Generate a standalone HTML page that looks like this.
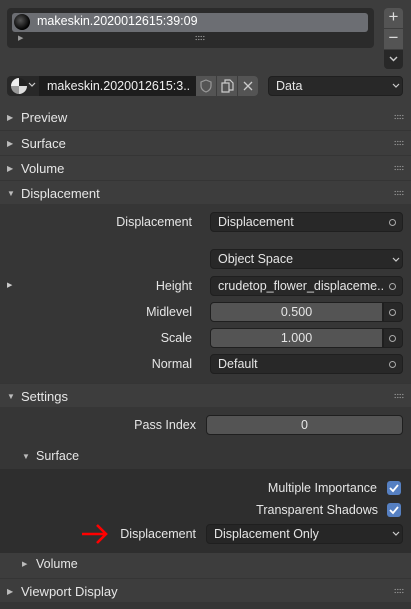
<!DOCTYPE html>
<html><head><style>
*{box-sizing:border-box;margin:0;padding:0}
body{width:411px;height:609px;background:#3d3d3d;font-family:"Liberation Sans","DejaVu Sans",sans-serif;font-size:12.5px;color:#e6e6e6;position:relative;overflow:hidden}
.a{position:absolute}
.hdr{position:absolute;left:0;width:411px;height:24px;background:#3d3d3d;border-top:1px solid #353535}
.hdr .t{position:absolute;left:21px;top:5px;font-size:13px}
.hdr .tri{position:absolute;left:7px;top:8px;font-size:8px;color:#bbb}
.dots{position:absolute;right:7px;top:9px;width:10px;height:6px;background:radial-gradient(circle,#888 0.6px,transparent 0.8px) 0 0/2.5px 3px}
.fld{position:absolute;height:20px;border-radius:4px;background:#282828;border:1px solid #1f1f1f;padding-left:7px;line-height:18px;font-size:12.5px}
.num{background:#545454;text-align:center;padding:0}
.lbl{position:absolute;text-align:right;font-size:12.5px;line-height:20px}
.dot{position:absolute;width:7px;height:7px;border:1.5px solid #aaa;border-radius:50%}
.cb{position:absolute;width:14px;height:14px;border-radius:3px;background:#5680c2}
</style></head><body>
<div class="a" style="left:7px;top:8px;width:367px;height:40px;background:#2b2b2b;border-radius:4px"></div>
<div class="a" style="left:12px;top:13px;width:356px;height:19px;background:#6c6e73;border-radius:3px"></div>
<div class="a" style="left:14px;top:14px;width:16px;height:16px;border-radius:50%;background:radial-gradient(circle at 40% 40%,#555,#000 70%)"></div>
<div class="a" style="left:37px;top:14px;font-size:12.5px;color:#fff">makeskin.2020012615:39:09</div>
<div class="a" style="left:18px;top:34px;font-size:7px;color:#999">▶</div>
<div class="a" style="left:195px;top:35px;width:10px;height:6px;background:radial-gradient(circle,#888 0.6px,transparent 0.8px) 0 0/2.5px 3px"></div>
<div class="a" style="left:384px;top:8px;width:19px;height:20px;background:#545454;border-radius:4px 4px 0 0;text-align:center;font-size:17px;line-height:18px;color:#ddd">+</div>
<div class="a" style="left:384px;top:29px;width:19px;height:20px;background:#545454;text-align:center;font-size:17px;line-height:18px;color:#ddd">−</div>
<div class="a" style="left:384px;top:50px;width:19px;height:19px;background:#282828;border-radius:0 0 4px 4px"></div>
<svg class="a" style="left:388px;top:55px" width="11" height="8"><path d="M2 2l3.5 3.5L9 2" stroke="#ccc" stroke-width="1.4" fill="none"/></svg>
<div class="a" style="left:7px;top:76px;width:32px;height:20px;background:#282828;border-radius:4px 0 0 4px"></div>
<div class="a" style="left:11px;top:78px;width:16px;height:16px;border-radius:50%;background:conic-gradient(#222 0 25%,#ddd 25% 50%,#999 50% 75%,#eee 75%)"></div>
<svg class="a" style="left:28px;top:82px" width="8" height="6"><path d="M1 1l3 3 3-3" stroke="#ccc" stroke-width="1.2" fill="none"/></svg>
<div class="a" style="left:39px;top:76px;width:157px;height:20px;background:#1d1d1d;padding-left:8px;line-height:20px;color:#eee">makeskin.2020012615:3..</div>
<div class="a" style="left:196px;top:76px;width:20px;height:20px;background:#545454"></div>
<svg class="a" style="left:198px;top:78px" width="16" height="16"><path d="M8 2l5 2v4c0 3-2.5 5-5 6-2.5-1-5-3-5-6V4z" stroke="#999" stroke-width="1.2" fill="none"/></svg>
<div class="a" style="left:217px;top:76px;width:20px;height:20px;background:#545454"></div>
<svg class="a" style="left:219px;top:78px" width="16" height="16"><path d="M3 5h7v9H3z M6 5V2h5l3 3v7h-4" stroke="#ccc" stroke-width="1.2" fill="none"/></svg>
<div class="a" style="left:238px;top:76px;width:20px;height:20px;background:#545454;border-radius:0 4px 4px 0"></div>
<svg class="a" style="left:243px;top:81px" width="10" height="10"><path d="M1 1l8 8M9 1l-8 8" stroke="#ccc" stroke-width="1.3"/></svg>
<div class="fld" style="left:268px;top:76px;width:135px;background:#282828">Data</div>
<svg class="a" style="left:392px;top:83px" width="8" height="6"><path d="M1 1l3 3 3-3" stroke="#ccc" stroke-width="1.2" fill="none"/></svg>
<div class="hdr" style="top:105px;border-top:none"><span class="tri">▶</span><span class="t">Preview</span><div class="dots"></div></div>
<div class="hdr" style="top:130px"><span class="tri">▶</span><span class="t">Surface</span><div class="dots"></div></div>
<div class="hdr" style="top:155px"><span class="tri">▶</span><span class="t">Volume</span><div class="dots"></div></div>
<div class="hdr" style="top:180px"><span class="tri">▼</span><span class="t">Displacement</span><div class="dots"></div></div>
<div class="a" style="left:0;top:204px;width:411px;height:179px;background:#363636"></div>
<div class="lbl" style="right:219px;top:212px">Displacement</div>
<div class="fld" style="left:210px;top:212px;width:193px">Displacement</div><div class="dot" style="left:389px;top:219px"></div>
<div class="fld" style="left:210px;top:249px;width:193px">Object Space</div>
<svg class="a" style="left:392px;top:257px" width="8" height="6"><path d="M1 1l3 3 3-3" stroke="#ccc" stroke-width="1.2" fill="none"/></svg>
<div class="a" style="left:7px;top:281px;font-size:7px;color:#ccc">▶</div>
<div class="lbl" style="right:219px;top:276px">Height</div>
<div class="fld" style="left:210px;top:276px;width:193px">crudetop_flower_displaceme..</div><div class="dot" style="left:389px;top:283px"></div>
<div class="lbl" style="right:219px;top:302px">Midlevel</div>
<div class="fld num" style="left:210px;top:302px;width:173px;border-radius:4px 0 0 4px">0.500</div>
<div class="fld" style="left:383px;top:302px;width:20px;border-radius:0 4px 4px 0"></div><div class="dot" style="left:389px;top:309px"></div>
<div class="lbl" style="right:219px;top:328px">Scale</div>
<div class="fld num" style="left:210px;top:328px;width:173px;border-radius:4px 0 0 4px">1.000</div>
<div class="fld" style="left:383px;top:328px;width:20px;border-radius:0 4px 4px 0"></div><div class="dot" style="left:389px;top:335px"></div>
<div class="lbl" style="right:219px;top:354px">Normal</div>
<div class="fld" style="left:210px;top:354px;width:193px">Default</div><div class="dot" style="left:389px;top:361px"></div>
<div class="hdr" style="top:383px"><span class="tri">▼</span><span class="t">Settings</span><div class="dots"></div></div>
<div class="a" style="left:0;top:407px;width:411px;height:146px;background:#363636"></div>
<div class="lbl" style="right:215px;top:415px">Pass Index</div>
<div class="fld num" style="left:206px;top:415px;width:197px">0</div>
<div class="a" style="left:22px;top:452px;font-size:8px;color:#bbb">▼</div>
<div class="a" style="left:36px;top:449px;font-size:12.5px">Surface</div>
<div class="a" style="left:0;top:469px;width:411px;height:84px;background:#2e2e2e"></div>
<div class="lbl" style="right:34px;top:478px">Multiple Importance</div>
<div class="cb" style="left:387px;top:481px"></div>
<svg class="a" style="left:387px;top:481px" width="14" height="14"><path d="M3 7l3 3 5-6" stroke="#fff" stroke-width="1.8" fill="none"/></svg>
<div class="lbl" style="right:33px;top:500px">Transparent Shadows</div>
<div class="cb" style="left:387px;top:503px"></div>
<svg class="a" style="left:387px;top:503px" width="14" height="14"><path d="M3 7l3 3 5-6" stroke="#fff" stroke-width="1.8" fill="none"/></svg>
<svg class="a" style="left:80px;top:522px" width="30" height="24"><path d="M2 12h24M17 3l9 9-9 9" stroke="#f00" stroke-width="2.6" fill="none"/></svg>
<div class="lbl" style="right:215px;top:524px">Displacement</div>
<div class="fld" style="left:206px;top:524px;width:197px;background:#262626">Displacement Only</div>
<svg class="a" style="left:392px;top:531px" width="8" height="6"><path d="M1 1l3 3 3-3" stroke="#ccc" stroke-width="1.2" fill="none"/></svg>
<div class="a" style="left:22px;top:560px;font-size:7px;color:#bbb">▶</div>
<div class="a" style="left:36px;top:557px;font-size:12.5px">Volume</div>
<div class="hdr" style="top:578px"><span class="tri">▶</span><span class="t">Viewport Display</span><div class="dots"></div></div>
<div class="a" style="left:0;top:602px;width:411px;height:7px;background:#363636"></div>
</body></html>
